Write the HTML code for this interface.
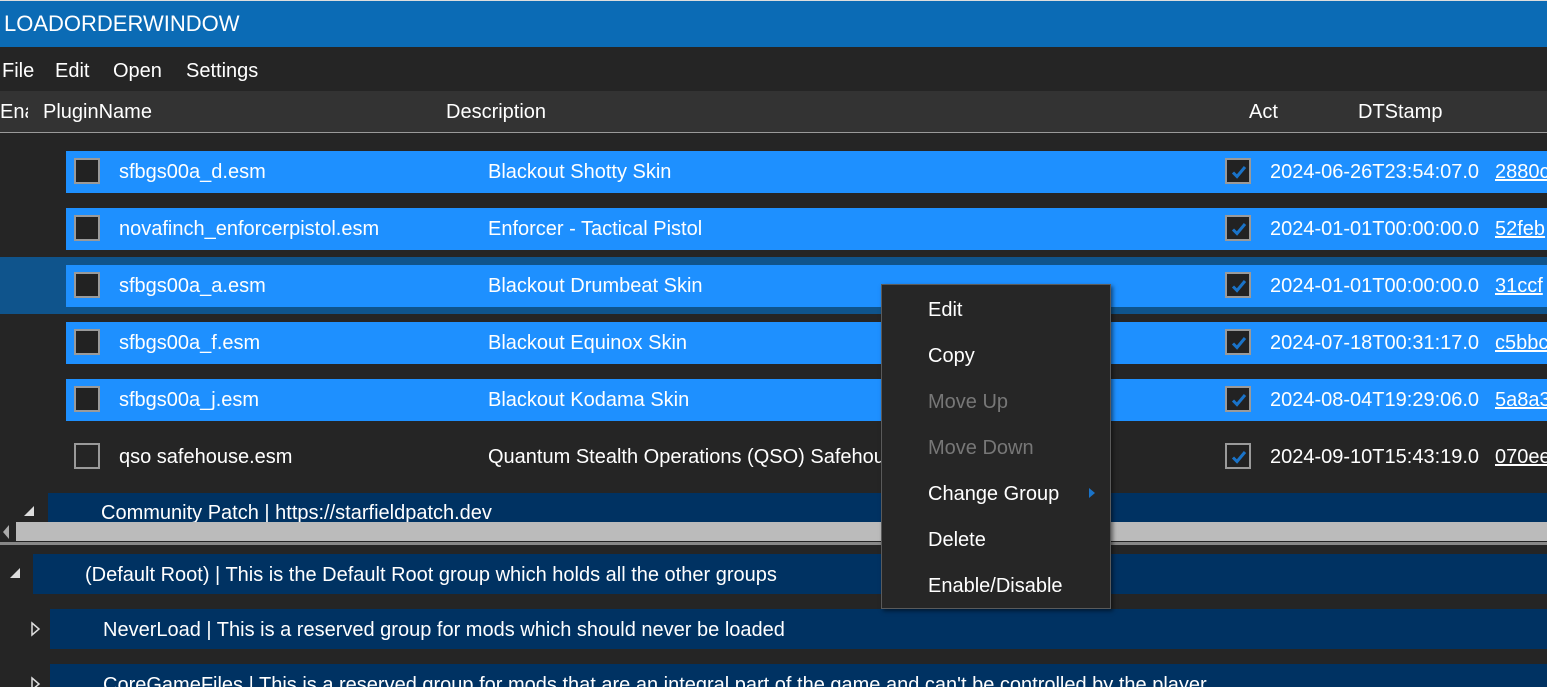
<!DOCTYPE html>
<html><head><meta charset="utf-8"><style>
*{margin:0;padding:0;box-sizing:border-box}
html,body{width:1547px;height:687px;overflow:hidden}
body{background:#252525;font-family:"Liberation Sans",sans-serif;color:#fff;position:relative}
.a{position:absolute;white-space:nowrap}
.t{font-size:20px;line-height:24px}
.row{position:absolute;left:66px;right:0;height:42px;background:#1e90ff}
.cb{position:absolute;width:26px;height:26px;border:2px solid #9a9a9a;background:#222}
.ck{position:absolute;width:26px;height:26px;border:2px solid #9a9a9a;background:#222}
.ck svg{position:absolute;left:3px;top:3px}
.nav{position:absolute;background:#003262;right:0}
.mi{position:absolute;left:46px;font-size:20px}
u{text-decoration:underline}
</style></head><body>
<div class="a" style="left:0;top:0;width:1547px;height:47px;background:#0b6bb5"></div>
<div class="a" style="left:0;top:0;width:1547px;height:1px;background:#ddd"></div>
<div class="a" style="left:4px;top:11px;font-size:22px;line-height:26px">LOADORDERWINDOW</div>
<div class="a" style="left:0;top:47px;width:1547px;height:44px;background:#252525"></div>
<div class="a t" style="left:2px;top:59px">File</div>
<div class="a t" style="left:55px;top:59px">Edit</div>
<div class="a t" style="left:113px;top:59px">Open</div>
<div class="a t" style="left:186px;top:59px">Settings</div>
<div class="a" style="left:0;top:91px;width:1547px;height:41px;background:#333"></div>
<div class="a" style="left:0;top:132px;width:1547px;height:1px;background:#9a9a9a"></div>
<div class="a t" style="left:0;top:100px;width:28px;overflow:hidden">Ena</div>
<div class="a t" style="left:43px;top:100px">PluginName</div>
<div class="a t" style="left:446px;top:100px">Description</div>
<div class="a t" style="left:1249px;top:100px;width:29px;overflow:hidden">Acti</div>
<div class="a t" style="left:1358px;top:100px">DTStamp</div>

<div class="a" style="left:0;top:257px;width:1547px;height:57px;background:#0f548c"></div>

<div class="row" style="top:151px"></div>
<div class="row" style="top:208px"></div>
<div class="row" style="top:265px"></div>
<div class="row" style="top:322px"></div>
<div class="row" style="top:379px"></div>

<div class="cb" style="left:74px;top:158px"></div>
<div class="a t" style="left:119px;top:160px">sfbgs00a_d.esm</div>
<div class="a t" style="left:488px;top:160px">Blackout Shotty Skin</div>
<div class="cb" style="left:74px;top:215px"></div>
<div class="a t" style="left:119px;top:217px">novafinch_enforcerpistol.esm</div>
<div class="a t" style="left:488px;top:217px">Enforcer - Tactical Pistol</div>
<div class="cb" style="left:74px;top:272px"></div>
<div class="a t" style="left:119px;top:274px">sfbgs00a_a.esm</div>
<div class="a t" style="left:488px;top:274px">Blackout Drumbeat Skin</div>
<div class="cb" style="left:74px;top:329px"></div>
<div class="a t" style="left:119px;top:331px">sfbgs00a_f.esm</div>
<div class="a t" style="left:488px;top:331px">Blackout Equinox Skin</div>
<div class="cb" style="left:74px;top:386px"></div>
<div class="a t" style="left:119px;top:388px">sfbgs00a_j.esm</div>
<div class="a t" style="left:488px;top:388px">Blackout Kodama Skin</div>
<div class="cb" style="left:74px;top:443px;background:#252525"></div>
<div class="a t" style="left:119px;top:445px">qso safehouse.esm</div>
<div class="a t" style="left:488px;top:445px">Quantum Stealth Operations (QSO) Safehouse</div>

<div class="ck" style="left:1225px;top:158px"><svg width="18" height="18" viewBox="0 0 18 18"><path d="M3 9.5l4 4L15 4" stroke="#1a73c8" stroke-width="3" fill="none"/></svg></div>
<div class="a t" style="left:1270px;top:160px">2024-06-26T23:54:07.0</div>
<div class="a t" style="left:1495px;top:160px"><u>2880c</u></div>
<div class="ck" style="left:1225px;top:215px"><svg width="18" height="18" viewBox="0 0 18 18"><path d="M3 9.5l4 4L15 4" stroke="#1a73c8" stroke-width="3" fill="none"/></svg></div>
<div class="a t" style="left:1270px;top:217px">2024-01-01T00:00:00.0</div>
<div class="a t" style="left:1495px;top:217px"><u>52feb</u></div>
<div class="ck" style="left:1225px;top:272px"><svg width="18" height="18" viewBox="0 0 18 18"><path d="M3 9.5l4 4L15 4" stroke="#1a73c8" stroke-width="3" fill="none"/></svg></div>
<div class="a t" style="left:1270px;top:274px">2024-01-01T00:00:00.0</div>
<div class="a t" style="left:1495px;top:274px"><u>31ccf</u></div>
<div class="ck" style="left:1225px;top:329px"><svg width="18" height="18" viewBox="0 0 18 18"><path d="M3 9.5l4 4L15 4" stroke="#1a73c8" stroke-width="3" fill="none"/></svg></div>
<div class="a t" style="left:1270px;top:331px">2024-07-18T00:31:17.0</div>
<div class="a t" style="left:1495px;top:331px"><u>c5bbc</u></div>
<div class="ck" style="left:1225px;top:386px"><svg width="18" height="18" viewBox="0 0 18 18"><path d="M3 9.5l4 4L15 4" stroke="#1a73c8" stroke-width="3" fill="none"/></svg></div>
<div class="a t" style="left:1270px;top:388px">2024-08-04T19:29:06.0</div>
<div class="a t" style="left:1495px;top:388px"><u>5a8a3</u></div>
<div class="ck" style="left:1225px;top:443px"><svg width="18" height="18" viewBox="0 0 18 18"><path d="M3 9.5l4 4L15 4" stroke="#1a73c8" stroke-width="3" fill="none"/></svg></div>
<div class="a t" style="left:1270px;top:445px">2024-09-10T15:43:19.0</div>
<div class="a t" style="left:1495px;top:445px"><u>070ee</u></div>

<div class="a" style="left:0;top:493px;width:1547px;height:29px;overflow:hidden">
  <div class="nav" style="left:48px;top:0;height:40px"></div>
  <svg class="a" style="left:23px;top:12px" width="12" height="12"><path d="M11 1V11H1Z" fill="#ddd"/></svg>
  <div class="a t" style="left:101px;top:8px">Community Patch | https://starfieldpatch.dev</div>
</div>
<div class="a" style="left:16px;top:522px;width:1531px;height:19px;background:#bbb"></div>
<svg class="a" style="left:1px;top:523px" width="10" height="18"><path d="M8 2L2 9L8 16Z" fill="#aaa"/></svg>
<div class="a" style="left:0;top:542px;width:1547px;height:3px;background:#888"></div>

<div class="nav" style="left:33px;top:554px;height:40px"></div>
<svg class="a" style="left:9px;top:567px" width="12" height="12"><path d="M11 1V11H1Z" fill="#ddd"/></svg>
<div class="a t" style="left:85px;top:563px">(Default Root) | This is the Default Root group which holds all the other groups</div>
<div class="nav" style="left:50px;top:609px;height:40px"></div>
<svg class="a" style="left:30px;top:621px" width="12" height="16"><path d="M2 2L9 8L2 14Z" fill="none" stroke="#ddd" stroke-width="1.5"/></svg>
<div class="a t" style="left:103px;top:618px">NeverLoad | This is a reserved group for mods which should never be loaded</div>
<div class="nav" style="left:50px;top:664px;height:40px"></div>
<svg class="a" style="left:30px;top:676px" width="12" height="16"><path d="M2 2L9 8L2 14Z" fill="none" stroke="#ddd" stroke-width="1.5"/></svg>
<div class="a t" style="left:103px;top:673px">CoreGameFiles | This is a reserved group for mods that are an integral part of the game and can't be controlled by the player</div>

<div class="a" style="left:881px;top:284px;width:230px;height:325px;background:#262626;border:1px solid #5a5a5a;box-shadow:2px 2px 4px rgba(0,0,0,.5)">
  <div class="mi" style="top:14px">Edit</div>
  <div class="mi" style="top:60px">Copy</div>
  <div class="mi" style="top:106px;color:#777">Move Up</div>
  <div class="mi" style="top:152px;color:#777">Move Down</div>
  <div class="mi" style="top:198px">Change Group</div>
  <svg class="a" style="left:206px;top:202px" width="8" height="12"><path d="M1 1L7 6L1 11Z" fill="#1a73c8"/></svg>
  <div class="mi" style="top:244px">Delete</div>
  <div class="mi" style="top:290px">Enable/Disable</div>
</div>
</body></html>
